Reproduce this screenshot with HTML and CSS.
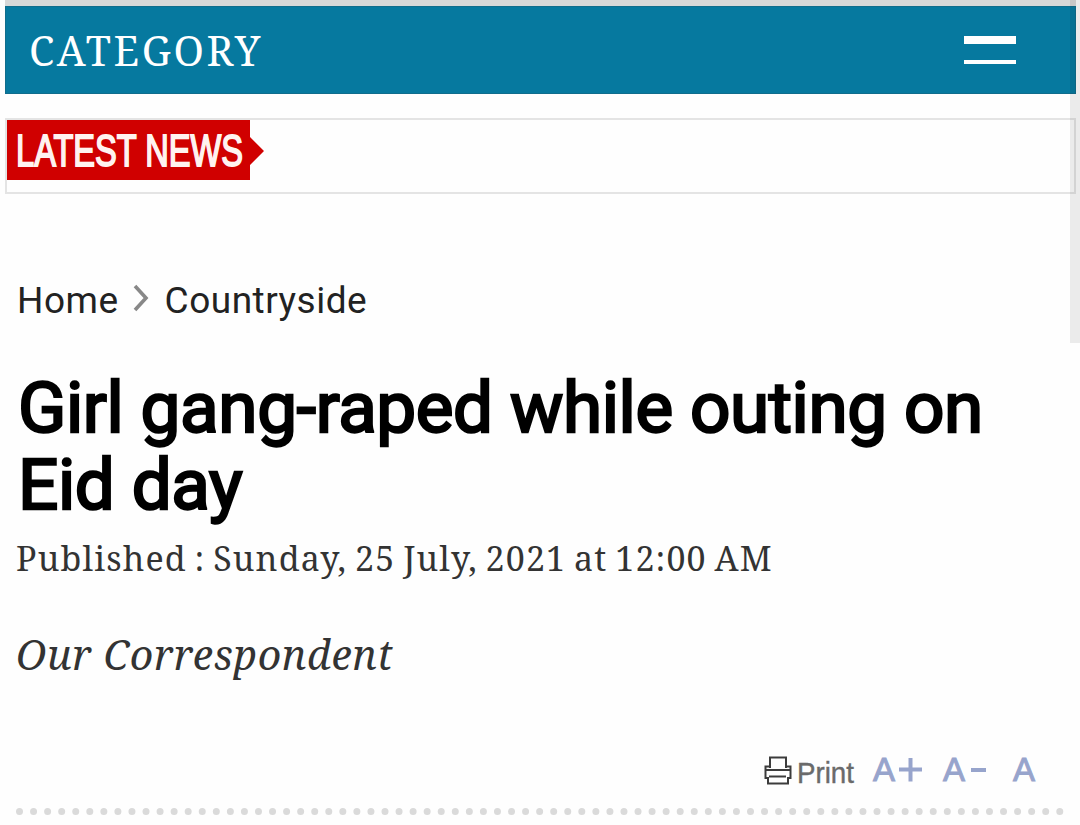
FILE: index.html
```html
<!DOCTYPE html>
<html lang="en">
<head>
    <meta charset="UTF-8">
    <meta name="viewport" content="width=device-width, initial-scale=1.0">
    <title>Countryside</title>
    <link rel="stylesheet" href="styles.css">
</head>
<body>
    <div class="wrapper">
        <div class="top-strip"></div>

        <nav class="navbar">
            <span class="navbar-title">CATEGORY</span>
            <div class="menu-icon">
                <span class="bar bar-thick"></span>
                <span class="bar"></span>
            </div>
        </nav>

        <div class="ticker">
            <svg class="ticker-label" width="258" height="60" viewBox="0 0 258 60">
                <path d="M0 0H243V17L257 31L243 45V60H0Z" fill="#d00000"/>
                <text x="9" y="46" textLength="227" lengthAdjust="spacingAndGlyphs">LATEST NEWS</text>
            </svg>
        </div>

        <main class="article">
            <div class="breadcrumb">
                <a class="crumb">Home</a>
                <svg class="chevron" width="16" height="28" viewBox="0 0 16 28">
                    <path d="M2 2L13 14L2 26" fill="none" stroke="#888" stroke-width="3.600"/>
                </svg>
                <a class="crumb">Countryside</a>
            </div>

            <h1 class="headline">Girl gang-raped while outing on Eid day</h1>
            <p class="published">Published : Sunday, 25 July, 2021 at 12:00 AM</p>
            <p class="author">Our Correspondent</p>

            <div class="tools">
                <svg width="276" height="46" viewBox="0 -8 276 46">
                    <g fill="none" stroke="#3c3c3c" stroke-width="2">
                        <path d="M6 13V2.500H22V13"/>
                        <path d="M6 11.500H1.500V23H4V28.500H24V23H26.500V11.500H22"/>
                        <path d="M2 15H26M5 21.500H22" stroke-width="1.800"/>
                    </g>
                    <text class="print" x="33" y="27.500" textLength="57" lengthAdjust="spacingAndGlyphs">Print</text>
                    <g class="size">
                        <text x="109" y="26" textLength="22" lengthAdjust="spacingAndGlyphs">A</text>
                        <text x="179" y="26" textLength="22" lengthAdjust="spacingAndGlyphs">A</text>
                        <text x="249" y="26" textLength="22" lengthAdjust="spacingAndGlyphs">A</text>
                        <path d="M135 14.500H158M146.500 3V26.500"/>
                        <path d="M207 15H222"/>
                    </g>
                </svg>
            </div>
            <div class="dots"></div>
        </main>
    </div>
    <div class="scrollbar"></div>
</body>
</html>
```
FILE: styles.css
```css
body {
    margin: 0;
    height: 825px;
    overflow: hidden;
    background-color: #fefefe;
    color: #333;
    font-family: "Noto Serif", "DejaVu Serif Condensed", "DejaVu Serif", serif;
}

.wrapper {
    margin: 0 4px 0 5px;
}

.top-strip {
    height: 6px;
    background-color: #d8d8d8;
}

.navbar {
    box-sizing: border-box;
    height: 88px;
    padding: 0 59px 0 23px;
    display: flex;
    align-items: center;
    justify-content: space-between;
    background-color: #06799f;
    border: 1px solid #106d8c;
}

.navbar-title {
    font-size: 41px;
    letter-spacing: 2.6px;
    color: #fff;
}

.menu-icon {
    display: flex;
    flex-direction: column;
    gap: 16px;
}

.bar {
    width: 52px;
    height: 4px;
    background-color: #fff;
}

.bar-thick {
    height: 8px;
}

.ticker {
    box-sizing: border-box;
    height: 76px;
    margin-top: 24px;
    border: 2px solid #e4e4e4;
}

.ticker-label {
    display: block;
    overflow: visible;
}

.ticker-label text {
    font-family: "Liberation Sans", sans-serif;
    font-size: 44px;
    fill: #fff3f0;
    stroke: #fff3f0;
    stroke-width: 1.8px;
}

.article {
    padding: 0 12px 0 11px;
}

.breadcrumb {
    display: flex;
    align-items: center;
    height: 42px;
    margin-top: 85px;
    font-family: Roboto, sans-serif;
    font-size: 37px;
    letter-spacing: 0.5px;
    color: #222;
}

.crumb:first-child {
    margin-left: 1px;
}

.chevron {
    margin: 0 16px 4px 14px;
}

.headline {
    margin: 48px 0 0 2px;
    font-family: Roboto, sans-serif;
    font-size: 71px;
    font-weight: 400;
    line-height: 77px;
    letter-spacing: -0.39px;
    color: #000;
    -webkit-text-stroke: 2.4px #000;
}

.published {
    margin: 11px 0 0;
    font-size: 34px;
    line-height: 48px;
    letter-spacing: 1.15px;
    word-spacing: -2.2px;
    white-space: nowrap;
}

.author {
    margin: 44px 0 0;
    font-size: 41px;
    line-height: 56px;
    letter-spacing: 0.65px;
    font-style: italic;
    white-space: nowrap;
}

.tools {
    display: flex;
    justify-content: flex-end;
    margin: 65px 24px 0 0;
}

.tools svg {
    display: block;
    overflow: visible;
}

.print {
    font-family: "Liberation Sans", sans-serif;
    font-size: 29px;
    fill: #6a6a6a;
    stroke: #6a6a6a;
    stroke-width: 0.4px;
}

.size {
    font-family: "Liberation Sans", sans-serif;
    font-size: 34px;
    fill: #97a4cc;
    stroke: #97a4cc;
    stroke-width: 1px;
}

.size path {
    stroke-width: 4px;
}

.dots {
    margin-top: 15px;
    border-bottom: 7px dotted #dadada;
}

.scrollbar {
    position: absolute;
    top: 0;
    right: 0;
    width: 10px;
    height: 343px;
    background-color: rgba(0, 0, 0, 0.075);
}
```
